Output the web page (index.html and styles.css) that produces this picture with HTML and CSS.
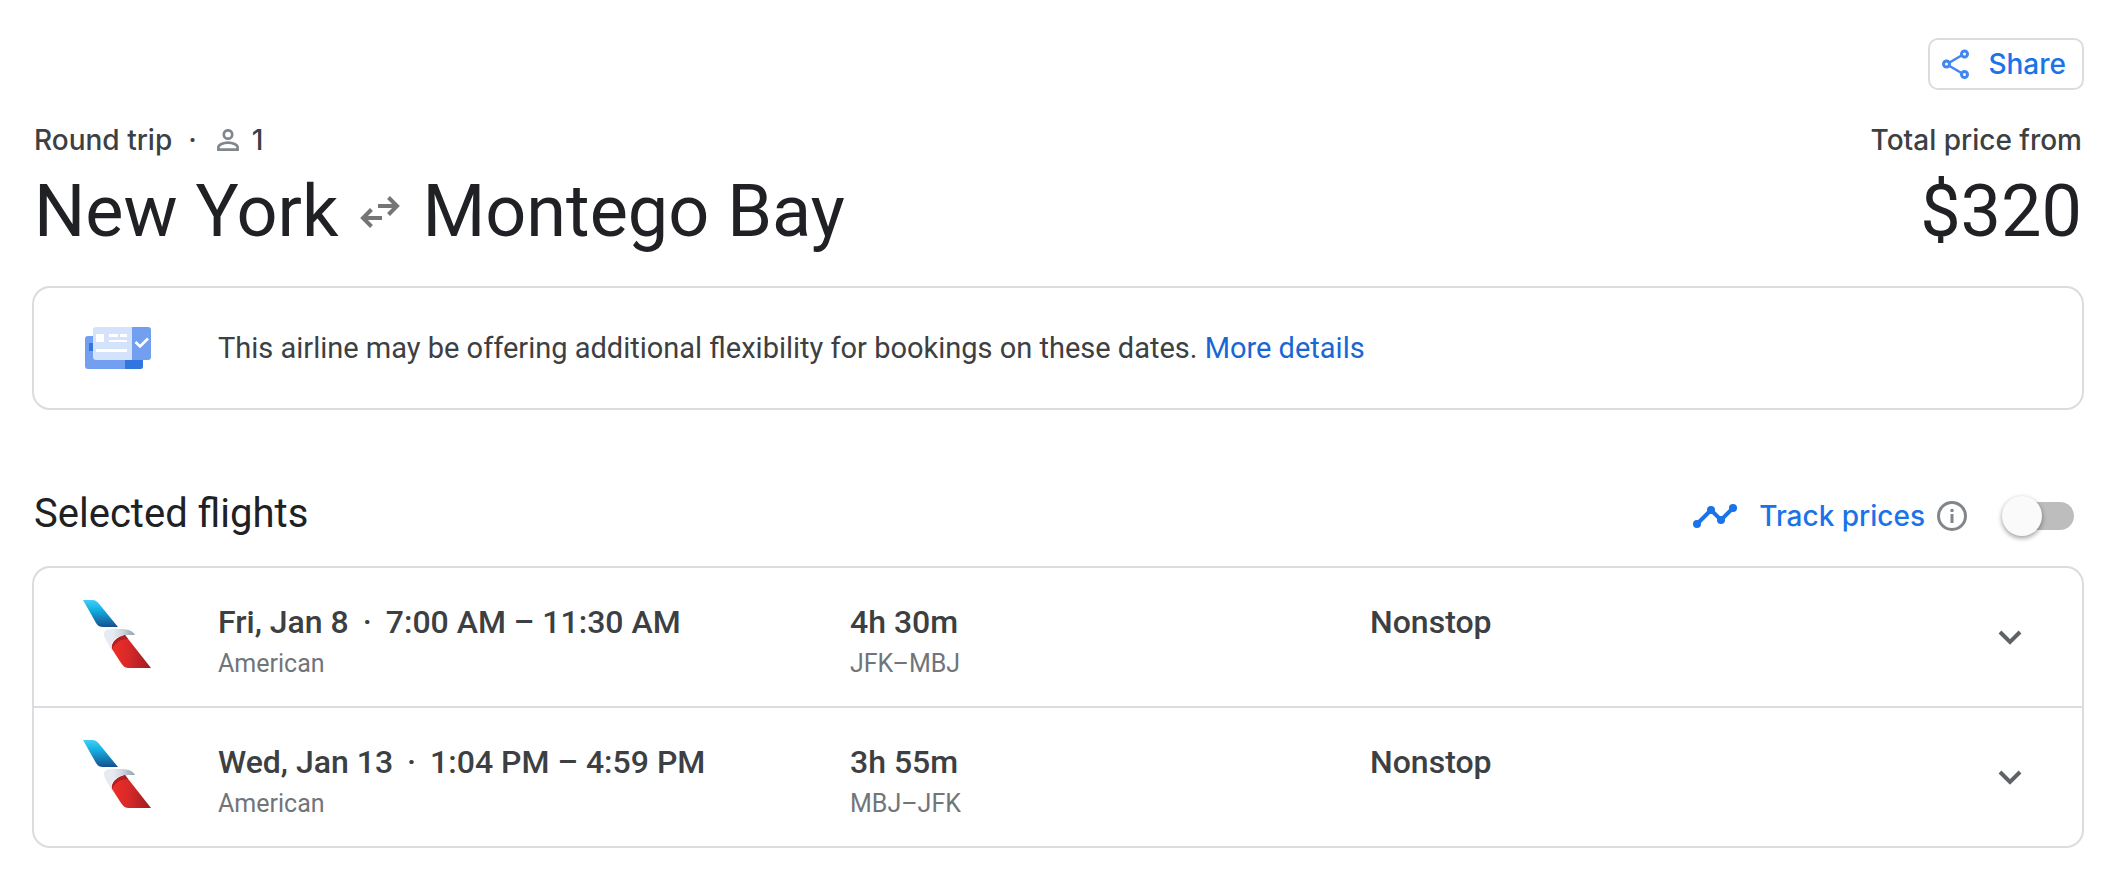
FILE: index.html
```html
<!DOCTYPE html>
<html lang="en">
<head>
    <meta charset="UTF-8">
    <meta name="viewport" content="width=device-width, initial-scale=1.0">
    <title>New York to Montego Bay</title>
    <link rel="stylesheet" href="styles.css">
</head>
<body>
    <!-- shared airline logo -->
    <svg class="defs" width="0" height="0" aria-hidden="true">
        <defs>
            <linearGradient id="aaBlue" x1="0" y1="0" x2="0" y2="1">
                <stop offset="0" stop-color="#45cdf5"/>
                <stop offset=".35" stop-color="#14b1e4"/>
                <stop offset="1" stop-color="#16508f"/>
            </linearGradient>
            <linearGradient id="aaGrey" x1="0" y1="0" x2="1" y2="0">
                <stop offset=".3" stop-color="#e6eaf1"/>
                <stop offset=".6" stop-color="#ccd5dd"/>
                <stop offset="1" stop-color="#8fa3ab"/>
            </linearGradient>
            <linearGradient id="aaRed" x1="0" y1="0" x2="1" y2="0">
                <stop offset=".1" stop-color="#e92d27"/>
                <stop offset=".45" stop-color="#d62828"/>
                <stop offset="1" stop-color="#9c1d20"/>
            </linearGradient>
            <symbol id="american" viewBox="0 0 68 68">
                <path fill="url(#aaBlue)" d="M0 0h9c4 0 6 2 8 5l18 22H20c-3 0-5-1-7-4z"/>
                <path fill="url(#aaGrey)" d="M29 51 22 38c-3-6 0-9 7-9h9c7 0 12 2 14 6h-7c-9 0-13 3-16 8z"/>
                <path fill="url(#aaRed)" d="M42 35 68 68H46c-4 0-6-2-8-5l-9-14c-1-7 5-12 13-14z"/>
                <path fill="#b01f24" d="M42 35l3 4c-8 0-13 4-16 10-1-7 5-12 13-14z"/>
            </symbol>
        </defs>
    </svg>

    <header>
        <div class="actions">
            <button class="share" type="button">
                <svg width="28" height="30" viewBox="0 0 28 30" fill="none" stroke="#4285f4" stroke-width="3">
                    <path d="M7.500 13.500 19.500 6.500M7.500 17 19.500 24" stroke-width="2.600"/>
                    <circle cx="4.500" cy="15" r="3"/>
                    <circle cx="22.500" cy="5" r="3"/>
                    <circle cx="22.500" cy="25.500" r="3"/>
                </svg>
                Share
            </button>
        </div>
        <div class="trip">
            <div>
                <p class="meta">
                    Round trip <span class="dot">·</span>
                    <svg width="22" height="22" viewBox="0 0 22 22" fill="none" stroke="#80868b" stroke-width="2.700">
                        <circle cx="11" cy="5.500" r="4.200"/>
                        <path d="M1.400 20.600v-2.100c0-2.700 5-4.800 9.600-4.800s9.600 2.100 9.600 4.800v2.100z"/>
                    </svg>
                    <span>1</span>
                </p>
                <h1>
                    New York
                    <svg width="40" height="32" viewBox="0 0 40 32" fill="none" stroke="#757575" stroke-width="4">
                        <path d="M18 10h19M28.500 1.500 37 10l-8.500 8.500M22 22H3M11.500 13.500 3 22l8.500 8.500"/>
                    </svg>
                    Montego Bay
                </h1>
            </div>
            <div class="price">
                <p class="meta">Total price from</p>
                <p class="amount">$320</p>
            </div>
        </div>
    </header>

    <section class="card notice">
        <svg width="66" height="42" viewBox="0 0 66 42">
            <rect y="9" width="58" height="33" rx="3" fill="#739ff0"/>
            <path fill="#3175e1" d="M4 16h4v8H4zM40 30h18v9a3 3 0 0 1-3 3H40z"/>
            <path fill="#d5e2fc" d="M11 0h37v33H11a3 3 0 0 1-3-3V3a3 3 0 0 1 3-3z"/>
            <path fill="#739ff0" d="M47 0h16a3 3 0 0 1 3 3v27a3 3 0 0 1-3 3H47z"/>
            <path fill="#fff" d="M11 7h8v8h-8zM24 7h9v3h-9zM35 7h7v3h-7zM24 13h18v2H24zM11 22h31v3H11z"/>
            <path d="m50.500 15 4.500 4.500 8-8" fill="none" stroke="#fff" stroke-width="2.600"/>
        </svg>
        <p>This airline may be offering additional flexibility for bookings on these dates. <a href="#">More details</a></p>
    </section>

    <section class="selected">
        <div class="section-head">
            <h2>Selected flights</h2>
            <div class="track">
                <svg width="44" height="24" viewBox="0 0 44 24" fill="#1a73e8">
                    <path d="M4 20 18 6l10 10L40 4" fill="none" stroke="#1a73e8" stroke-width="4"/>
                    <circle cx="4" cy="20" r="4"/>
                    <circle cx="18" cy="6" r="4"/>
                    <circle cx="28" cy="16" r="4"/>
                    <circle cx="40" cy="4" r="4"/>
                </svg>
                <label for="track">Track prices</label>
                <button class="icon-button" type="button" aria-label="About price tracking">
                    <svg width="30" height="30" viewBox="0 0 30 30">
                        <circle cx="15" cy="15" r="13.500" fill="none" stroke="#80868b" stroke-width="3"/>
                        <path fill="#80868b" d="M13.500 8h3v3h-3zM13.500 13h3v9h-3z"/>
                    </svg>
                </button>
                <input class="switch" type="checkbox" role="switch" id="track">
            </div>
        </div>

        <ul class="card flights">
            <li>
                <svg class="logo" width="68" height="68"><use href="#american"/></svg>
                <div>
                    <p class="primary">Fri, Jan 8 <span class="dot">·</span> 7:00 AM – 11:30 AM</p>
                    <p class="secondary">American</p>
                </div>
                <div>
                    <p class="primary">4h 30m</p>
                    <p class="secondary">JFK–MBJ</p>
                </div>
                <p class="primary">Nonstop</p>
                <button class="icon-button" type="button" aria-label="Flight details">
                    <svg width="24" height="16" viewBox="0 0 24 16"><path d="m2 2 10 10L22 2" fill="none" stroke="#5f6368" stroke-width="4"/></svg>
                </button>
            </li>
            <li>
                <svg class="logo" width="68" height="68"><use href="#american"/></svg>
                <div>
                    <p class="primary">Wed, Jan 13 <span class="dot">·</span> 1:04 PM – 4:59 PM</p>
                    <p class="secondary">American</p>
                </div>
                <div>
                    <p class="primary">3h 55m</p>
                    <p class="secondary">MBJ–JFK</p>
                </div>
                <p class="primary">Nonstop</p>
                <button class="icon-button" type="button" aria-label="Flight details">
                    <svg width="24" height="16" viewBox="0 0 24 16"><path d="m2 2 10 10L22 2" fill="none" stroke="#5f6368" stroke-width="4"/></svg>
                </button>
            </li>
        </ul>
    </section>
</body>
</html>
```
FILE: styles.css
```css
* {margin: 0; padding: 0; box-sizing: border-box;}
body {
    font-family: Roboto, "Liberation Sans", sans-serif;
    font-size: 29px;
    color: #3c4043;
    background: #fff;
    padding: 38px 34px 34px 32px;
}
svg {display: block; flex: none;}
.defs {position: absolute;}
button {font: inherit; background: none; border: none; cursor: pointer;}
a {color: #1967d2; text-decoration: none;}
.card {border: 2px solid #dadce0; border-radius: 18px;}

.share, .meta, .track {
    font-family: Inter, "Liberation Sans", sans-serif;
    font-size: 28px;
    font-weight: 500;
}
.actions {display: flex; justify-content: flex-end; margin-bottom: 30px;}
.share {
    display: flex;
    align-items: center;
    gap: 18px;
    height: 52px;
    padding: 0 16px 0 12px;
    border: 2px solid #dadce0;
    border-radius: 10px;
    color: #1a73e8;
}
.trip {display: flex; justify-content: space-between; padding: 0 2px;}
.meta {display: flex; align-items: center; line-height: 40px;}
.meta .dot {margin: 0 20px 0 16px;}
.meta svg {margin-right: 13px;}
h1, .amount {
    display: flex;
    align-items: center;
    margin-top: 2px;
    font-size: 72px;
    font-weight: 400;
    line-height: 100px;
    color: #202124;
}
h1 svg {margin: 0 22px;}
.price {display: flex; flex-direction: column; align-items: flex-end;}

.notice {
    display: flex;
    align-items: center;
    gap: 67px;
    min-height: 124px;
    margin-top: 24px;
    padding: 0 51px;
}

.selected {margin-top: 76px;}
.section-head {
    display: flex;
    justify-content: space-between;
    height: 60px;
    margin-bottom: 20px;
    padding: 0 10px 0 2px;
}
h2 {font-size: 40px; font-weight: 400; line-height: 56px; color: #202124;}
.track {display: flex; align-items: center;}
.track label {margin: 0 12px 0 22px; color: #1a73e8;}
.switch {
    appearance: none;
    display: flex;
    align-items: center;
    width: 68px;
    height: 28px;
    margin-left: 39px;
    border-radius: 14px;
    background: #bdbdbd;
    cursor: pointer;
}
.switch::before {
    content: "";
    flex: none;
    width: 40px;
    height: 40px;
    margin-left: -4px;
    border-radius: 50%;
    background: #fafafa;
    box-shadow: 0 2px 5px rgba(0,0,0,0.4);
}
.switch:checked {background: #8ab4f8; justify-content: flex-end;}
.switch:checked::before {background: #1a73e8;}

.flights {list-style: none;}
.flights li {
    display: grid;
    grid-template-columns: 135px 632fr 520fr 598fr 84px;
    align-items: start;
    padding: 32px 30px 22px 49px;
}
.flights li + li {border-top: 2px solid #dadce0;}
.primary {font-size: 32px; font-weight: 500; line-height: 44px;}
.primary .dot {margin: 0 6px;}
.secondary {font-size: 25px; line-height: 40px; color: #70757a;}
.flights .icon-button {display: flex; align-items: center; justify-content: center; height: 76px;}
```
